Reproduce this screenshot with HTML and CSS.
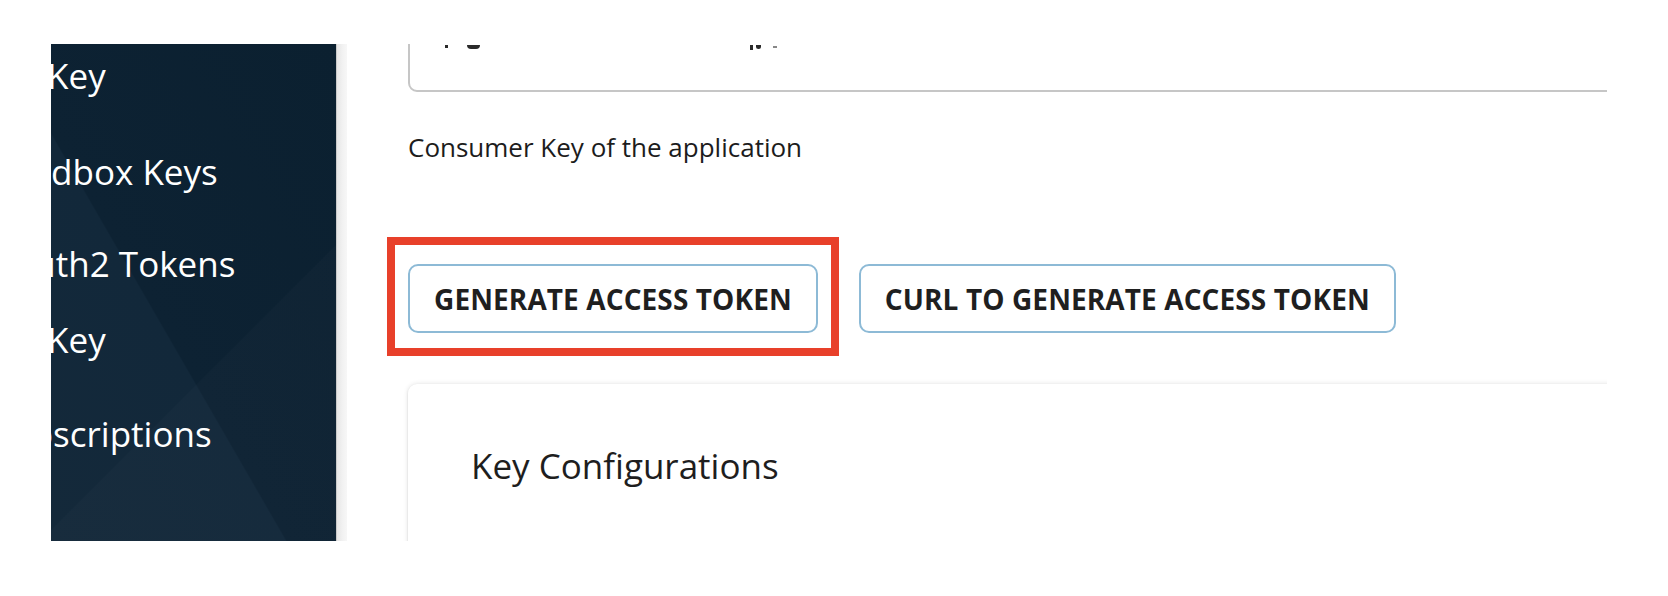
FILE: index.html
```html
<!DOCTYPE html>
<html lang="en">
<head>
<meta charset="utf-8">
<title>Application Keys</title>
<link rel="stylesheet" href="styles.css">
</head>
<body>
<div class="frame">
  <nav class="sidebar">
    <ul class="menu">
      <li class="item item-a"><span class="label">API Key</span></li>
      <li class="item item-b"><span class="label">Sandbox Keys</span></li>
      <li class="item item-c"><span class="label">OAuth2 Tokens</span></li>
      <li class="item item-d"><span class="label">API Key</span></li>
      <li class="item item-e"><span class="label">Subscriptions</span></li>
    </ul>
  </nav>
  <div class="divider"></div>
  <main class="main">
    <div class="field">
      <span class="mark mk1"></span>
      <span class="mark mk2"></span>
      <span class="mark mk3"></span>
      <span class="mark mk4"></span>
      <span class="mark mk5"></span>
    </div>
    <p class="helper">Consumer Key of the application</p>
    <div class="actions">
      <div class="highlight-wrap">
        <button class="btn" type="button">GENERATE ACCESS TOKEN</button>
        <span class="highlight"></span>
      </div>
      <button class="btn" type="button">CURL TO GENERATE ACCESS TOKEN</button>
    </div>
    <section class="card">
      <h2 class="card-title">Key Configurations</h2>
    </section>
  </main>
</div>
</body>
</html>
```

FILE: styles.css
```css
* { box-sizing: border-box; }

html, body {
  margin: 0;
  padding: 0;
  background: #ffffff;
  font-family: "Open Sans", "Noto Sans", sans-serif;
}

.frame {
  margin: 44px 0 0 51px;
  width: 1556px;
  height: 497px;
  overflow: hidden;
  display: flex;
  background: #ffffff;
}

/* Sidebar */
.sidebar {
  width: 285px;
  flex: 0 0 285px;
  height: 100%;
  overflow: hidden;
  background:
    linear-gradient(135deg, rgba(255,255,255,0) 0%, rgba(255,255,255,0) 62%, rgba(255,255,255,0.015) 62.3%, rgba(255,255,255,0.015) 100%),
    linear-gradient(60deg, #14293a 0%, #12283a 41%, #0d2233 41.3%, #0b2030 100%);
}

.menu {
  list-style: none;
  margin: 0;
  padding: 9px 0 0 0;
}

.item {
  height: 46px;
  line-height: 46px;
  font-size: 35px;
  color: #ffffff;
  white-space: nowrap;
}

.item-a { margin-bottom: 50px; }
.item-b { margin-bottom: 46px; }
.item-c { margin-bottom: 30px; }
.item-d { margin-bottom: 48px; }

.label { display: inline-block; }
.item-a .label, .item-d .label { margin-left: -66px; }
.item-b .label { margin-left: -60px; }
.item-c .label { margin-left: -66px; }
.item-e .label { margin-left: -60px; }

.divider {
  width: 11px;
  flex: 0 0 11px;
  height: 100%;
  background: linear-gradient(to right, #c9c9c9 0, #c9c9c9 1px, #e6e6e6 1px, #f2f2f2 60%, #f7f7f7 100%);
}

/* Main */
.main {
  flex: 1 1 auto;
  min-width: 0;
  height: 100%;
  overflow: hidden;
  padding-left: 61px;
}

.field {
  position: relative;
  margin-top: -44px;
  height: 92px;
  width: calc(100% + 40px);
  border: 2px solid #c6c6c6;
  border-radius: 9px;
}

.mark {
  position: absolute;
  background: #2a2a2a;
}
.mk1 { left: 35px; top: 43px; width: 3px; height: 3px; }
.mk2 { left: 57px; top: 43px; width: 13px; height: 4px; border-radius: 0 0 5px 5px; }
.mk3 { left: 340px; top: 43px; width: 3px; height: 5px; }
.mk4 { left: 346px; top: 43px; width: 5px; height: 4px; border-radius: 0 0 3px 3px; }
.mk5 { left: 363px; top: 44px; width: 4px; height: 2px; background: #888; }

.helper {
  margin: 37px 0 0 0;
  font-size: 26px;
  line-height: 36px;
  color: #1c1c1c;
}

.actions {
  display: flex;
  gap: 41px;
  margin-top: 99px;
}

.highlight-wrap {
  position: relative;
  display: flex;
}

.btn {
  height: 69px;
  padding: 0 24px;
  display: inline-flex;
  align-items: center;
  background: #ffffff;
  border: 2px solid #8dbad6;
  border-radius: 10px;
  font-family: "Open Sans", "Noto Sans", sans-serif;
  font-weight: 700;
  font-size: 28px;
  letter-spacing: 0.1px;
  color: #1f1f1f;
  white-space: nowrap;
}

.highlight {
  position: absolute;
  top: -27px;
  left: -21px;
  right: -21px;
  bottom: -23px;
  border: 8px solid #e8402a;
  pointer-events: none;
}

.card {
  margin-top: 51px;
  width: calc(100% + 40px);
  height: 300px;
  background: #ffffff;
  border-radius: 9px;
  box-shadow: 0 0 5px rgba(0,0,0,0.12), 0 1px 2px rgba(0,0,0,0.12);
  padding: 58px 0 0 63px;
}

.card-title {
  margin: 0;
  font-size: 35px;
  line-height: 48px;
  font-weight: 400;
  color: #1e1e1e;
}
```
